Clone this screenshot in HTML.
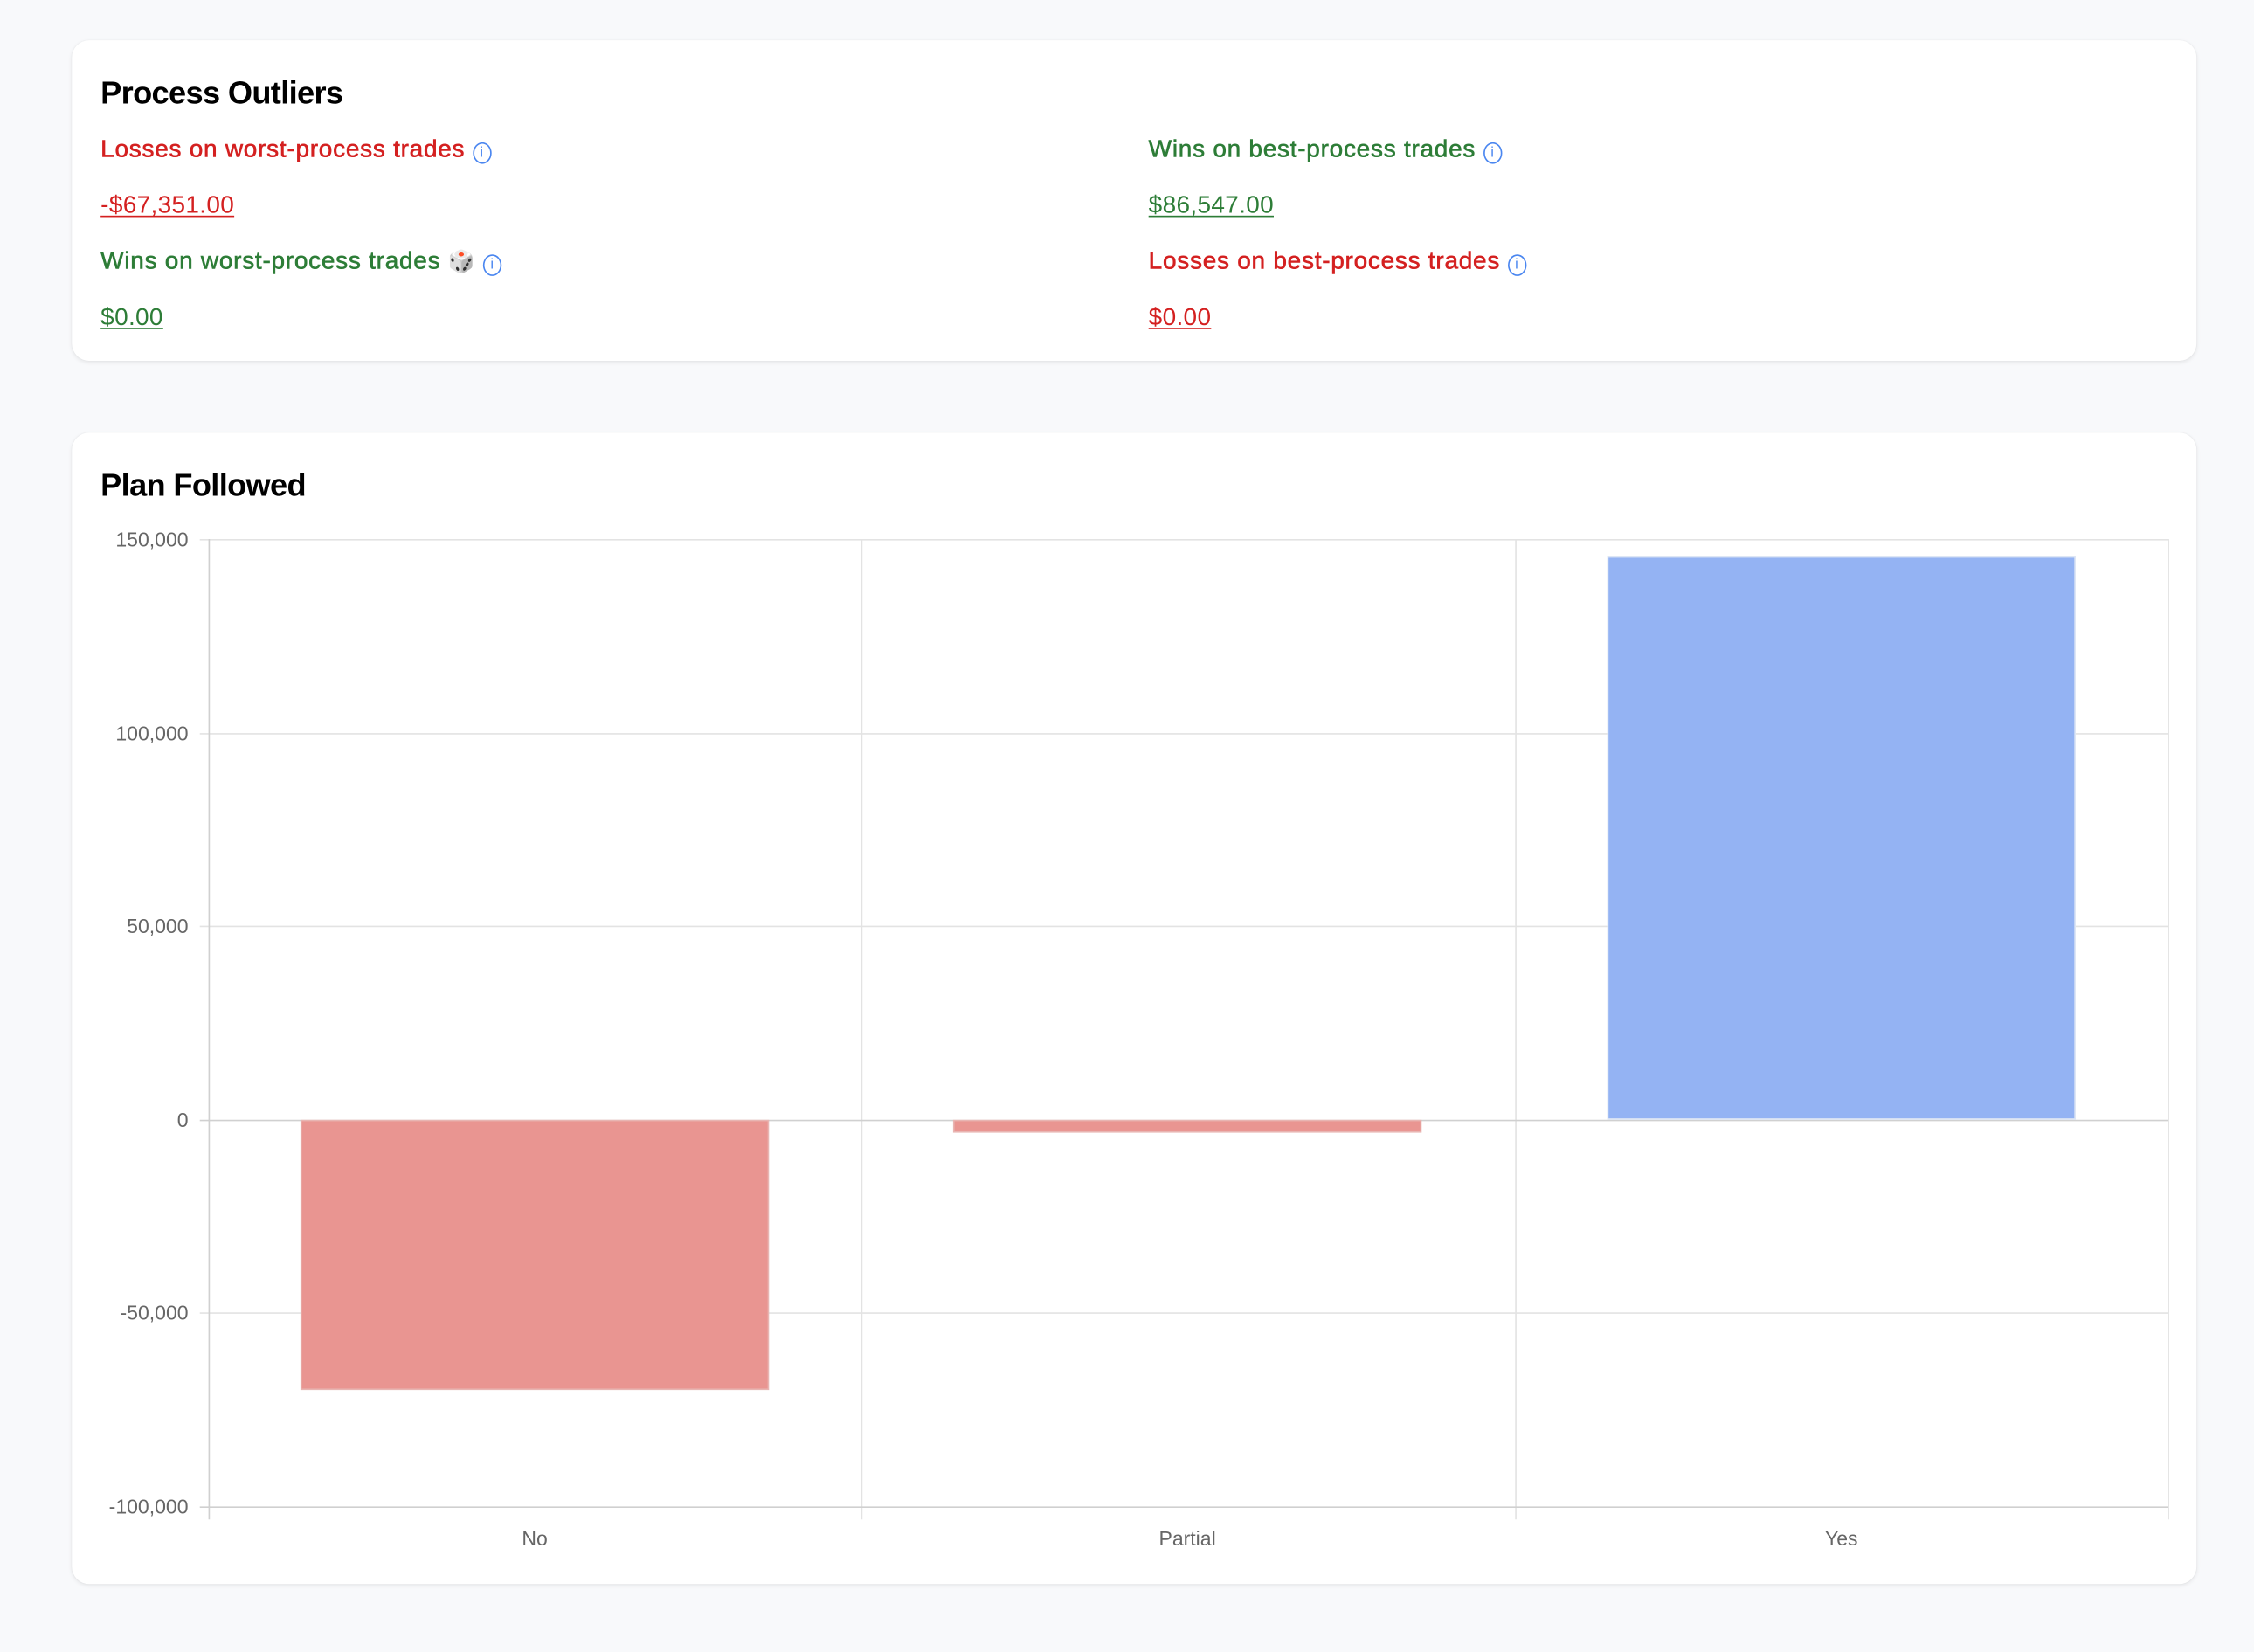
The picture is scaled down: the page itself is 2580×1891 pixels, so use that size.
<!DOCTYPE html>
<html><head><meta charset="utf-8"><style>
html,body{margin:0;padding:0;background:#f8f9fb;width:2580px;height:1890px;overflow:hidden}
#w{position:absolute;left:0;top:0;width:1568px;height:1149px;transform:scale(1.64541);transform-origin:0 0;font-family:"Liberation Sans",sans-serif}
.card{position:absolute;left:50px;width:1478px;background:#fff;border-radius:12px;box-shadow:0 1px 3px rgba(0,0,0,0.08),0 0 1px rgba(0,0,0,0.06)}
.t{position:absolute;left:20px;font-size:22px;font-weight:bold;color:#000;letter-spacing:-0.4px}
.l{position:absolute;font-size:17px;letter-spacing:0.45px;-webkit-text-stroke:0.35px currentColor;white-space:nowrap;line-height:20px}
.v{position:absolute;font-size:17px;letter-spacing:0.2px;text-decoration:underline;text-underline-offset:2px;white-space:nowrap;line-height:20px}
.r{color:#d42020}.g{color:#2d7d37}
.i{display:inline-block;width:11px;height:13px;border:1px solid #4a86f0;border-radius:50%;color:#4a86f0;font-size:10px;line-height:13px;text-align:center;-webkit-text-stroke:0;letter-spacing:0;vertical-align:0px;margin-left:5px;font-weight:normal}
.ax{font-size:14px;fill:#666;font-family:"Liberation Sans",sans-serif}
</style></head><body><div id="w">
<div class="card" style="top:28px;height:223px">
<div class="t" style="top:24px">Process Outliers</div>
<div class="l r" style="left:20px;top:66px">Losses on worst-process trades<span class="i">i</span></div>
<div class="v r" style="left:20px;top:105px">-$67,351.00</div>
<div class="l g" style="left:20px;top:144px">Wins on worst-process trades <span style="-webkit-text-stroke:0;font-size:15px">🎲</span><span class="i">i</span></div>
<div class="v g" style="left:20px;top:183px">$0.00</div>
<div class="l g" style="left:749px;top:66px">Wins on best-process trades<span class="i">i</span></div>
<div class="v g" style="left:749px;top:105px">$86,547.00</div>
<div class="l r" style="left:749px;top:144px">Losses on best-process trades<span class="i">i</span></div>
<div class="v r" style="left:749px;top:183px">$0.00</div>
</div>
<div class="card" style="top:301px;height:801px">
<div class="t" style="top:24px">Plan Followed</div>
</div>
<svg style="position:absolute;left:0;top:0" width="1568" height="1149">
<g stroke="#e3e3e3" stroke-width="1">
<line x1="139" y1="375.5" x2="1508" y2="375.5"/>
<line x1="139" y1="510.5" x2="1508" y2="510.5"/>
<line x1="139" y1="644.5" x2="1508" y2="644.5"/>
<line x1="139" y1="913.5" x2="1508" y2="913.5"/>
<line x1="599.5" y1="375" x2="599.5" y2="1057"/>
<line x1="1054.5" y1="375" x2="1054.5" y2="1057"/>
<line x1="1508.5" y1="375" x2="1508.5" y2="1057"/>
</g>
<g stroke="#d0d0d0">
<line x1="139" y1="779.5" x2="1508" y2="779.5"/>
<line x1="139" y1="1048.5" x2="1508" y2="1048.5"/>
<line x1="145.5" y1="375" x2="145.5" y2="1057"/>
</g>
<rect x="209.5" y="779.5" width="325" height="187" fill="#e99591" stroke="#e8b5b2"/>
<rect x="663.5" y="779.5" width="325" height="8" fill="#e99591" stroke="#e8b5b2"/>
<rect x="1118.5" y="387.5" width="325" height="391" fill="#94b3f3" stroke="#dde6f5"/>
<g class="ax" text-anchor="end">
<text x="131" y="380">150,000</text>
<text x="131" y="515">100,000</text>
<text x="131" y="649">50,000</text>
<text x="131" y="784">0</text>
<text x="131" y="918">-50,000</text>
<text x="131" y="1053">-100,000</text>
</g>
<g class="ax" text-anchor="middle">
<text x="372" y="1075">No</text>
<text x="826" y="1075">Partial</text>
<text x="1281" y="1075">Yes</text>
</g>
</svg>
</div></body></html>
